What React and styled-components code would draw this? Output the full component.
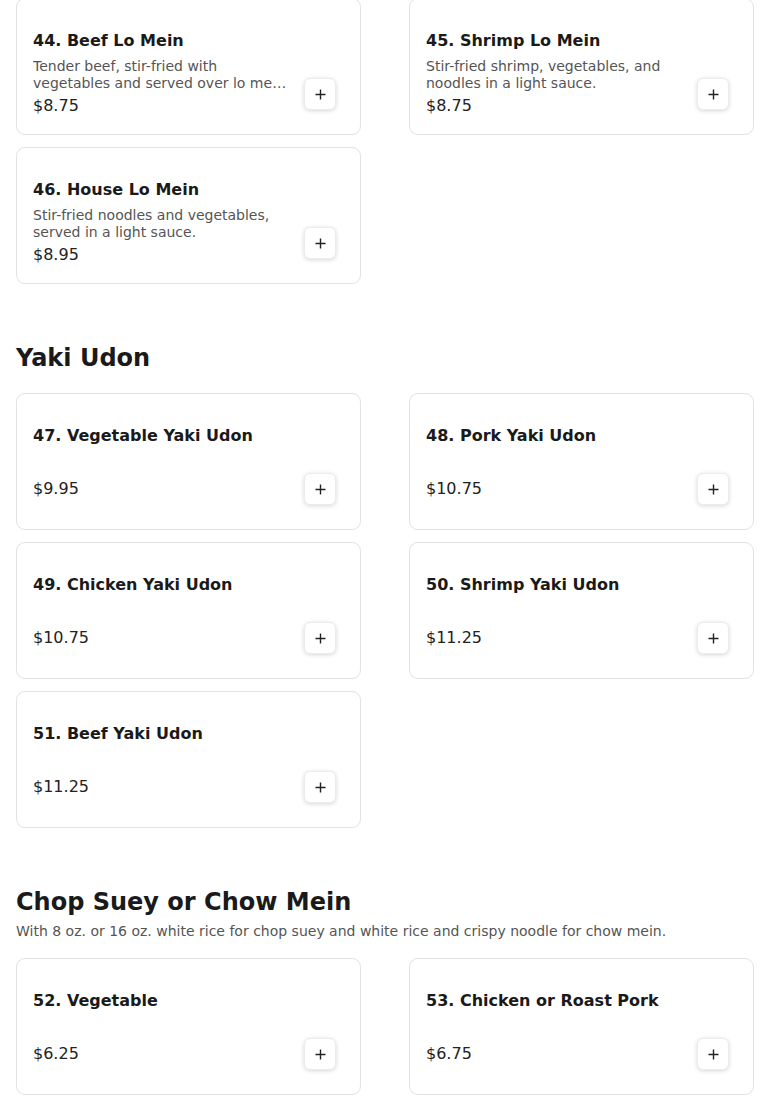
import React from 'react';
import styled, { createGlobalStyle } from 'styled-components';

const sections = [
  {
    id: 'lo-mein',
    title: null,
    items: [
      { no: 44, name: 'Beef Lo Mein', desc: 'Tender beef, stir-fried with vegetables and served over lo mein noodles in a savory brown sauce.', price: '8.75' },
      { no: 45, name: 'Shrimp Lo Mein', desc: 'Stir-fried shrimp, vegetables, and noodles in a light sauce.', price: '8.75' },
      { no: 46, name: 'House Lo Mein', desc: 'Stir-fried noodles and vegetables, served in a light sauce.', price: '8.95' },
    ],
  },
  {
    id: 'yaki-udon',
    title: 'Yaki Udon',
    items: [
      { no: 47, name: 'Vegetable Yaki Udon', price: '9.95' },
      { no: 48, name: 'Pork Yaki Udon', price: '10.75' },
      { no: 49, name: 'Chicken Yaki Udon', price: '10.75' },
      { no: 50, name: 'Shrimp Yaki Udon', price: '11.25' },
      { no: 51, name: 'Beef Yaki Udon', price: '11.25' },
    ],
  },
  {
    id: 'chop-suey',
    title: 'Chop Suey or Chow Mein',
    note: 'With 8 oz. or 16 oz. white rice for chop suey and white rice and crispy noodle for chow mein.',
    items: [
      { no: 52, name: 'Vegetable', price: '6.25' },
      { no: 53, name: 'Chicken or Roast Pork', price: '6.75' },
    ],
  },
];

const GlobalStyle = createGlobalStyle`
  html, body {
    margin: 0;
    padding: 0;
    background: #fff;
  }
  body {
    font-family: 'DejaVu Sans', 'Liberation Sans', sans-serif;
    color: #1a1a1a;
  }
`;

// page is shown scrolled a couple of pixels into the Lo Mein grid
const Page = styled.main`
  padding: 0 16px;
  margin-top: -2px;
  display: flex;
  flex-direction: column;
  gap: 58px;
`;

const Section = styled.section``;

const SectionHead = styled.header`
  margin-bottom: 19px;
`;

const SectionTitle = styled.h2`
  margin: 0;
  font-size: 24px;
  line-height: 32px;
  font-weight: 700;
  color: #1a1a1a;
`;

const SectionNote = styled.p`
  margin: 3px 0 -2px;
  font-size: 14px;
  line-height: 20px;
  color: #555;
`;

const Grid = styled.div`
  display: grid;
  grid-template-columns: 1fr 1fr;
  column-gap: 48px;
  row-gap: 12px;
`;

const Card = styled.article`
  box-sizing: border-box;
  height: 137px;
  border: 1px solid #e2e2e2;
  border-radius: 9px;
  background: #fff;
  padding: 16px;
  display: flex;
  gap: 8px;
`;

const Info = styled.div`
  flex: 1;
  min-width: 0;
  padding-top: 14px;
  display: flex;
  flex-direction: column;
`;

const Name = styled.h3`
  margin: 0;
  font-size: 16px;
  line-height: 24px;
  font-weight: 700;
  color: #1a1a1a;
`;

const Desc = styled.p`
  margin: 5px 0 0;
  padding-bottom: 3px;
  font-size: 14px;
  line-height: 17px;
  color: #555;
  display: -webkit-box;
  -webkit-line-clamp: 2;
  -webkit-box-orient: vertical;
  overflow: hidden;
`;

const Price = styled.div`
  margin-top: ${p => (p.$spaced ? '29px' : '3px')};
  font-size: 16px;
  line-height: 24px;
  color: #222;
`;

const Actions = styled.div`
  align-self: flex-end;
  padding: 8px;
`;

const AddButton = styled.button`
  width: 32px;
  height: 32px;
  padding: 0;
  border: 1px solid #ececec;
  border-radius: 6px;
  background: #fff;
  box-shadow: 0 1px 4px rgba(0, 0, 0, 0.16);
  display: flex;
  align-items: center;
  justify-content: center;
  color: #222;
  cursor: pointer;
`;

const PlusIcon = () => (
  <svg width="11" height="11" viewBox="0 0 11 11" fill="none">
    <path d="M5.5 0.5v10M0.5 5.5h10" stroke="currentColor" strokeWidth="1.4" />
  </svg>
);

const MenuCard = ({ item }) => (
  <Card>
    <Info>
      <Name>{item.no}. {item.name}</Name>
      {item.desc && <Desc>{item.desc}</Desc>}
      <Price $spaced={!item.desc}>${item.price}</Price>
    </Info>
    <Actions>
      <AddButton aria-label={`Add ${item.name}`}>
        <PlusIcon />
      </AddButton>
    </Actions>
  </Card>
);

export default function App() {
  return (
    <>
      <GlobalStyle />
      <Page>
        {sections.map(section => (
          <Section key={section.id}>
            {section.title && (
              <SectionHead>
                <SectionTitle>{section.title}</SectionTitle>
                {section.note && <SectionNote>{section.note}</SectionNote>}
              </SectionHead>
            )}
            <Grid>
              {section.items.map(item => (
                <MenuCard key={item.no} item={item} />
              ))}
            </Grid>
          </Section>
        ))}
      </Page>
    </>
  );
}
